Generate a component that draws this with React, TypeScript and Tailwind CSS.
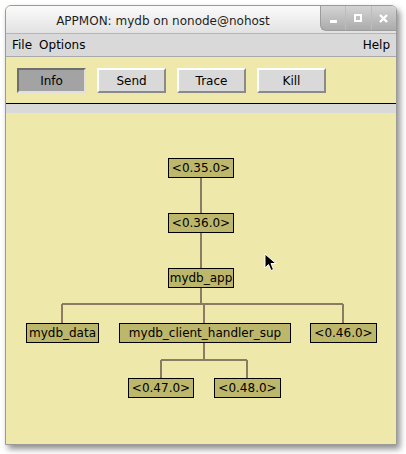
const font = { fontFamily: '"DejaVu Sans", Verdana, sans-serif' };

type Node = { label: string; x: number; y: number; w: number };

const nodes: Node[] = [
  { label: "<0.35.0>", x: 162, y: 45, w: 66 },
  { label: "<0.36.0>", x: 162, y: 100, w: 66 },
  { label: "mydb_app", x: 162, y: 155, w: 66 },
  { label: "mydb_data", x: 20, y: 210, w: 73 },
  { label: "mydb_client_handler_sup", x: 113, y: 210, w: 172 },
  { label: "<0.46.0>", x: 304, y: 210, w: 67 },
  { label: "<0.47.0>", x: 122, y: 265, w: 66 },
  { label: "<0.48.0>", x: 208, y: 265, w: 67 },
];

// tree edges drawn on the canvas (canvas coords)
const edges = [
  "M195 65 V191",
  "M56 191 H337",
  "M56 191 V210",
  "M198 191 V210",
  "M337 191 V210",
  "M198 230 V247",
  "M155 247 H241",
  "M155 247 V265",
  "M241 247 V265",
];

function ToolButton({ label, pressed }: { label: string; pressed?: boolean }) {
  return (
    <button
      className={
        pressed
          ? "w-[69px] h-[25px] text-[12px] text-black bg-[#a3a3a3] border-2 border-t-[#6e6e6e] border-l-[#6e6e6e] border-b-[#e0e0e0] border-r-[#e0e0e0]"
          : "w-[69px] h-[25px] text-[12px] text-black bg-[#d9d9d9] border-2 border-t-white border-l-white border-b-[#8a8a8a] border-r-[#8a8a8a]"
      }
    >
      {label}
    </button>
  );
}

export default function App() {
  return (
    <div className="w-[406px] h-[454px] bg-white pt-[5px] pl-[5px]" style={font}>
      <div className="w-[392px] h-[440px] flex flex-col rounded-t-[6px] border border-[#9a9a9a] shadow-[3px_4px_6px_rgba(0,0,0,0.45)] bg-[#eee8aa] overflow-hidden">
        {/* title bar */}
        <div className="h-[28px] flex bg-gradient-to-b from-[#fbfbfb] to-[#e2e2e2] border-b border-[#b5b5b5]">
          <div className="flex-1 flex items-center justify-center text-[12px] text-[#1e1e1e] pt-[3px]">
            APPMON: mydb on nonode@nohost
          </div>
          <div className="w-[76px] h-[25px] flex rounded-bl-[6px] bg-gradient-to-b from-[#d4d4d4] to-[#ababab] border-l border-b border-[#9c9c9c]">
            <div className="flex-1 flex items-center justify-center border-r border-[#bdbdbd]">
              <div className="w-[7px] h-[3px] bg-white mt-[7px]" />
            </div>
            <div className="flex-1 flex items-center justify-center border-r border-[#bdbdbd]">
              <div className="w-[8px] h-[8px] border-2 border-white" />
            </div>
            <div className="flex-1 flex items-center justify-center">
              <svg width="9" height="9" viewBox="0 0 9 9">
                <path d="M1 1 L8 8 M8 1 L1 8" stroke="white" strokeWidth="2.4" />
              </svg>
            </div>
          </div>
        </div>

        {/* menu bar */}
        <div className="h-[23px] flex items-center justify-between bg-[#d9d9d9] border-b border-[#a8a8a8] px-[6px] text-[12px] text-black">
          <div className="flex gap-[7px]">
            <span>File</span>
            <span>Options</span>
          </div>
          <span>Help</span>
        </div>

        {/* toolbar */}
        <div className="h-[46px] flex items-start gap-[11px] pl-[11px] pt-[11px]">
          <ToolButton label="Info" pressed />
          <ToolButton label="Send" />
          <ToolButton label="Trace" />
          <ToolButton label="Kill" />
        </div>
        <div className="h-[1px] bg-black" />
        <div className="h-[9px] bg-[#d9d9d9]" />

        {/* process tree canvas */}
        <div className="relative flex-1 bg-[#eee8aa]">
          <svg className="absolute inset-0" width="390" height="330">
            {edges.map((d) => (
              <path key={d} d={d} stroke="#8b7b62" strokeWidth="2" fill="none" />
            ))}
          </svg>
          {nodes.map((n) => (
            <div
              key={n.label}
              className="absolute h-[20px] flex items-center justify-center bg-[#bdb76b] border border-black text-[12px] text-black leading-none"
              style={{ left: n.x, top: n.y, width: n.w }}
            >
              {n.label}
            </div>
          ))}
          {/* mouse pointer */}
          <svg className="absolute left-[258px] top-[140px]" width="14" height="20" viewBox="0 0 14 20">
            <path
              d="M1 1 L1 15 L4.5 11.5 L7 17.5 L9.5 16.5 L7 10.5 L12 10.5 Z"
              fill="black"
              stroke="white"
              strokeWidth="1"
              strokeLinejoin="round"
            />
          </svg>
        </div>
      </div>
    </div>
  );
}
